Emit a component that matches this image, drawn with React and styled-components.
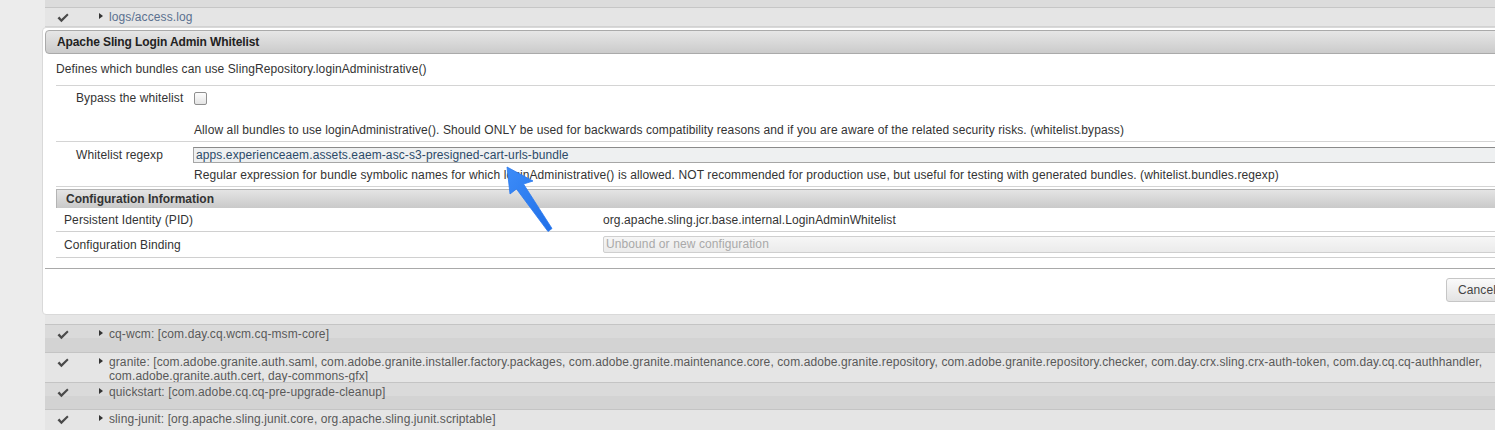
import React from 'react';
import styled, { createGlobalStyle } from 'styled-components';

const Global = createGlobalStyle`
  html, body { margin: 0; padding: 0; }
  body {
    background: #ececec;
    font-family: "Liberation Sans", Arial, sans-serif;
    font-size: 12px;
    letter-spacing: 0.1px;
    color: #333;
  }
`;

const Page = styled.div`
  position: relative;
  width: 1495px;
  height: 430px;
  overflow: hidden;
  display: flex;
`;

const Gutter = styled.div`
  width: 45px;
  flex: none;
  background: #ececec;
`;

const Main = styled.div`
  flex: 1;
  min-width: 0;
  background: #e6e6e6;
  display: flex;
  flex-direction: column;
`;

const HeadStub = styled.div`
  height: 7px;
  flex: none;
  background: #dcdcdc;
  border-bottom: 1px solid #c6c6c6;
`;

const BundleRow = styled.div`
  display: flex;
  align-items: flex-start;
  flex: none;
  box-sizing: border-box;
  height: ${p => p.$h}px;
  padding-top: ${p => p.$pt || 2}px;
  border-top: ${p => (p.$noTop ? 'none' : '1px solid #c4c4c4')};
  border-bottom: ${p => (p.$bottom ? '1px solid #d2d2d2' : 'none')};
  background: ${p =>
    p.$dark ? 'linear-gradient(#dadada 0 50%, #d3d3d3 50% 100%)' : '#e5e5e5'};
`;

const CheckCell = styled.div`
  width: 54px;
  flex: none;
  padding-left: 12px;
  box-sizing: border-box;
  height: 14px;
  display: flex;
  align-items: center;
  padding-top: 2px;
`;

const Toggle = styled.span`
  width: 0;
  height: 0;
  flex: none;
  margin-top: 3px;
  margin-right: 6px;
  border-left: 4px solid #333;
  border-top: 3.5px solid transparent;
  border-bottom: 3.5px solid transparent;
`;

const BundleText = styled.div`
  line-height: 14px;
  color: ${p => (p.$link ? '#5b7190' : '#595959')};
  padding-right: 10px;
`;

const Strip = styled.div`
  height: 9px;
  flex: none;
  background: #e6e6e6;
`;

const Dialog = styled.div`
  flex: none;
  margin-left: -3px;
  width: 1500px;
  height: 288px;
  box-sizing: border-box;
  background: #fff;
  border: 1px solid #d9d9d9;
  border-radius: 4px;
  padding: 2px;
  display: flex;
  flex-direction: column;
`;

const TitleBar = styled.div`
  height: 22px;
  flex: none;
  border: 1px solid #aaa;
  border-radius: 4px;
  background: linear-gradient(#e6e6e6, #cbcbcb);
  padding-left: 11px;
  display: flex;
  align-items: center;
  font-weight: bold;
  letter-spacing: -0.1px;
  color: #222;
  font-size: 12px;
`;

const Content = styled.div`
  height: 214px;
  flex: none;
  box-sizing: border-box;
  padding-left: 11px;
  display: flex;
  flex-direction: column;
`;

const Description = styled.div`
  padding: 8px 0 9px;
  line-height: 14px;
  color: #333;
`;

const FormTable = styled.div`
  display: flex;
  flex-direction: column;
  border-top: 1px solid #d4d4d4;
`;

const FormRow = styled.div`
  display: grid;
  grid-template-columns: 137px 1fr;
  padding: ${p => p.$pt}px 0 4px;
  border-bottom: 1px solid #d4d4d4;
`;

const FieldLabel = styled.div`
  padding-left: 20px;
  line-height: 16px;
  color: #333;
`;

const FieldValue = styled.div`
  display: flex;
  flex-direction: column;
  align-items: flex-start;
`;

const CheckLine = styled.div`
  height: 16px;
  display: flex;
  align-items: center;
  padding-left: 1px;
`;

const CheckBox = styled.span`
  width: 11px;
  height: 11px;
  border: 1px solid #8f8f8f;
  border-radius: 2px;
  background: linear-gradient(#fdfdfd, #e4e4e4);
`;

const Help = styled.div`
  margin-top: ${p => p.$mt}px;
  line-height: 14px;
  padding-left: 1px;
  color: #333;
`;

const TextInput = styled.div`
  width: 1400px;
  height: 14px;
  border: 1px solid #a6a6a6;
  border-top-color: #8a8a8a;
  background: #eef0f1;
  color: #2c4a68;
  line-height: 14px;
  padding-left: 2px;
`;

const ConfigBlock = styled.div`
  margin-top: 2px;
  display: flex;
  flex-direction: column;
`;

const ConfigHead = styled.div`
  height: 18px;
  border-top: 1px solid #b4b4b4;
  border-left: 1px solid #b4b4b4;
  background: linear-gradient(#e4e4e4, #c9c9c9);
  padding-left: 9px;
  display: flex;
  align-items: center;
  font-weight: bold;
  letter-spacing: 0;
  color: #333;
`;

const ConfigRow = styled.div`
  display: grid;
  grid-template-columns: 547px 1fr;
  height: ${p => p.$h}px;
  align-items: center;
  border-bottom: 1px solid #d0d0d0;
`;

const ConfigLabel = styled.div`
  padding-left: 8px;
  color: #333;
`;

const ConfigValue = styled.div`
  color: #333;
`;

const Select = styled.div`
  width: 1000px;
  height: 15px;
  border: 1px solid #cfcfcf;
  border-radius: 2px;
  background: linear-gradient(#f6f6f6, #ebebeb);
  color: #a9a9a9;
  line-height: 15px;
  padding-left: 2px;
`;

const ButtonPane = styled.div`
  flex: 1;
  border-top: 1px solid #a9a9a9;
  display: flex;
  justify-content: flex-end;
  align-items: flex-start;
  padding: 9px 20px 0 0;
`;

const Button = styled.div`
  width: 60px;
  height: 22px;
  border: 1px solid #c6c6c6;
  border-radius: 3px;
  background: linear-gradient(#fafafa, #e3e3e3);
  color: #444;
  padding-left: 11px;
  display: flex;
  align-items: center;
  font-size: 12px;
`;

const ArrowLayer = styled.svg`
  position: absolute;
  left: 0;
  top: 0;
  pointer-events: none;
`;

const Check = () => (
  <svg width="12" height="10" viewBox="0 0 12 10">
    <polygon points="0.5,5.2 2.4,3.6 4.4,5.9 10.2,0.6 11.6,2 4.4,9.2" fill="#4a4a4a" />
  </svg>
);

const bundles = [
  { name: 'cq-wcm: [com.day.cq.wcm.cq-msm-core]', h: 28, dark: true, pt: 2 },
  {
    name: 'granite: [com.adobe.granite.auth.saml, com.adobe.granite.installer.factory.packages, com.adobe.granite.maintenance.core, com.adobe.granite.repository, com.adobe.granite.repository.checker, com.day.crx.sling.crx-auth-token, com.day.cq.cq-authhandler, com.adobe.granite.auth.cert, day-commons-gfx]',
    h: 30,
    pt: 2,
  },
  { name: 'quickstart: [com.adobe.cq.cq-pre-upgrade-cleanup]', h: 27, dark: true, pt: 2 },
  { name: 'sling-junit: [org.apache.sling.junit.core, org.apache.sling.junit.scriptable]', h: 30, pt: 2 },
];

const Bundle = ({ b, link, noTop, bottom }) => (
  <BundleRow $h={b.h} $dark={b.dark} $pt={b.pt} $noTop={noTop} $bottom={bottom}>
    <CheckCell><Check /></CheckCell>
    <Toggle />
    <BundleText $link={link}>{b.name}</BundleText>
  </BundleRow>
);

export default function App() {
  return (
    <>
      <Global />
      <Page>
        <Gutter />
        <Main>
          <HeadStub />
          <Bundle b={{ name: 'logs/access.log', h: 19, pt: 2 }} link noTop bottom />
          <Dialog>
            <TitleBar>Apache Sling Login Admin Whitelist</TitleBar>
            <Content>
              <Description>Defines which bundles can use SlingRepository.loginAdministrative()</Description>
              <FormTable>
                <FormRow $pt={4}>
                  <FieldLabel>Bypass the whitelist</FieldLabel>
                  <FieldValue>
                    <CheckLine><CheckBox /></CheckLine>
                    <Help $mt={17}>
                      Allow all bundles to use loginAdministrative(). Should ONLY be used for backwards compatibility reasons and if you are aware of the related security risks. (whitelist.bypass)
                    </Help>
                  </FieldValue>
                </FormRow>
                <FormRow $pt={5}>
                  <FieldLabel>Whitelist regexp</FieldLabel>
                  <FieldValue>
                    <TextInput>apps.experienceaem.assets.eaem-asc-s3-presigned-cart-urls-bundle</TextInput>
                    <Help $mt={5}>
                      Regular expression for bundle symbolic names for which loginAdministrative() is allowed. NOT recommended for production use, but useful for testing with generated bundles. (whitelist.bundles.regexp)
                    </Help>
                  </FieldValue>
                </FormRow>
              </FormTable>
              <ConfigBlock>
                <ConfigHead>Configuration Information</ConfigHead>
                <ConfigRow $h={23}>
                  <ConfigLabel>Persistent Identity (PID)</ConfigLabel>
                  <ConfigValue>org.apache.sling.jcr.base.internal.LoginAdminWhitelist</ConfigValue>
                </ConfigRow>
                <ConfigRow $h={25}>
                  <ConfigLabel>Configuration Binding</ConfigLabel>
                  <Select>Unbound or new configuration</Select>
                </ConfigRow>
              </ConfigBlock>
            </Content>
            <ButtonPane>
              <Button>Cancel</Button>
            </ButtonPane>
          </Dialog>
          <Strip />
          {bundles.map(b => (
            <Bundle key={b.name} b={b} />
          ))}
        </Main>
        <ArrowLayer width="1495" height="430" viewBox="0 0 1495 430">
          <defs>
            <linearGradient id="ag" x1="0" y1="0" x2="1" y2="1">
              <stop offset="0" stopColor="#3d8cf8" />
              <stop offset="1" stopColor="#1f6fe8" />
            </linearGradient>
          </defs>
          <polygon
            points="507,167 533,181 523.5,184 552,228.5 548,231.5 516.5,189 510,194"
            fill="url(#ag)"
            stroke="#2a78ef"
            strokeWidth="0.8"
            strokeLinejoin="round"
          />
        </ArrowLayer>
      </Page>
    </>
  );
}
